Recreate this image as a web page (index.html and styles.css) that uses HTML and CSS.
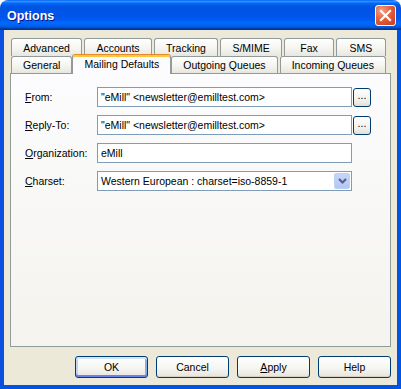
FILE: index.html
```html
<!DOCTYPE html>
<html lang="en">
<head>
  <meta charset="UTF-8">
  <title>Options</title>
  <link rel="stylesheet" href="styles.css">
</head>
<body>
  <div class="window">
    <!-- Title Bar -->
    <div class="titlebar">
      <span class="title">Options</span>
      <button class="close-button" aria-label="Close">
        <svg width="13" height="13" viewBox="0 0 13 13">
          <path d="M2 2 L11 11 M11 2 L2 11" stroke="#fff" stroke-width="2.2" stroke-linecap="square"></path>
        </svg>
      </button>
    </div>

    <div class="client">
      <!-- Tabs -->
      <div class="tabs">
        <div class="tab-row back">
          <div class="tab">Advanced</div>
          <div class="tab">Accounts</div>
          <div class="tab">Tracking</div>
          <div class="tab">S/MIME</div>
          <div class="tab">Fax</div>
          <div class="tab">SMS</div>
        </div>
        <div class="tab-row front">
          <div class="tab">General</div>
          <div class="tab active">Mailing Defaults</div>
          <div class="tab">Outgoing Queues</div>
          <div class="tab">Incoming Queues</div>
        </div>
      </div>

      <!-- Tab Panel -->
      <div class="tab-panel">
        <div class="form-grid">
          <label class="field-label"><u>F</u>rom:</label>
          <div class="text-field">"eMill" &lt;newsletter@emilltest.com&gt;</div>
          <button class="browse-button">...</button>

          <label class="field-label"><u>R</u>eply-To:</label>
          <div class="text-field">"eMill" &lt;newsletter@emilltest.com&gt;</div>
          <button class="browse-button">...</button>

          <label class="field-label"><u>O</u>rganization:</label>
          <div class="text-field">eMill</div>
          <span></span>

          <label class="field-label"><u>C</u>harset:</label>
          <div class="text-field select">
            <span class="select-value">Western European : charset=iso-8859-1</span>
            <span class="select-arrow">
              <svg width="9" height="6" viewBox="0 0 9 6">
                <path d="M1 1 L4.5 4.5 L8 1" fill="none" stroke="#4d6185" stroke-width="2"></path>
              </svg>
            </span>
          </div>
          <span></span>
        </div>
      </div>

      <!-- Dialog Buttons -->
      <div class="button-row">
        <button class="dialog-button default">OK</button>
        <button class="dialog-button">Cancel</button>
        <button class="dialog-button"><u>A</u>pply</button>
        <button class="dialog-button">Help</button>
      </div>
    </div>
  </div>
</body>
</html>
```

FILE: styles.css
```css
* {
  margin: 0;
  padding: 0;
  box-sizing: border-box;
}

body {
  background-color: #ffffff;
  font-family: "Liberation Sans", Arial, sans-serif;
  font-size: 10.5px;
  color: #000000;
}

button {
  font: inherit;
  color: inherit;
}

.window {
  width: 401px;
  height: 389px;
  display: flex;
  flex-direction: column;
}

/* Title bar */
.titlebar {
  height: 30px;
  flex: none;
  display: flex;
  align-items: center;
  justify-content: space-between;
  padding: 0 5px 0 7px;
  border-radius: 8px 8px 0 0;
  background: linear-gradient(to bottom,
    #0058ee 0%, #3593ff 4%, #288eff 6%, #127dff 8%, #036ffc 10%,
    #0262ee 14%, #0057e5 20%, #0054e3 24%, #0055eb 56%, #005bf5 66%,
    #026afe 76%, #0062ef 86%, #0052d6 92%, #0040ab 94%, #003092 100%);
}

.title {
  color: #ffffff;
  font-weight: bold;
  font-size: 12.5px;
  padding-top: 1px;
  text-shadow: 1px 1px #0f1089;
}

.close-button {
  width: 21px;
  height: 21px;
  display: flex;
  align-items: center;
  justify-content: center;
  border: 1px solid #ffffff;
  border-radius: 3px;
  background: radial-gradient(circle at 30% 25%, #f4a088 0%, #e3603c 45%, #c8391a 100%);
  cursor: pointer;
}

/* Client area */
.client {
  flex: 1;
  display: flex;
  flex-direction: column;
  background-color: #ece9d8;
  border: 4px solid #0054e3;
  border-top: none;
  border-left-color: #0a4fe0;
  padding: 8px 6px 7px 6px;
}

/* Tabs */
.tabs {
  display: flex;
  flex-direction: column;
  padding: 0 5px 0 1px;
}

.tab-row {
  display: flex;
  gap: 2px;
}

.tab-row.back {
  height: 18px;
}

.tab-row.front {
  height: 17px;
}

.tab {
  flex: 1 1 auto;
  display: flex;
  align-items: center;
  justify-content: center;
  padding: 0 6px;
  white-space: nowrap;
  border: 1px solid #919b9c;
  border-bottom: none;
  border-radius: 3px 3px 0 0;
  background: linear-gradient(to bottom, #ffffff, #f3f3ef 60%, #e8e6dd);
}

.tab-row.back .tab {
  min-width: 50px;
  padding-top: 1px;
}

.tab.active {
  position: relative;
  z-index: 1;
  height: 20px;
  margin: -2px -2px -1px;
  padding-bottom: 2px;
  border-top-color: #e68b2c;
  box-shadow: inset 0 2px 0 #ffc83c;
  background: #fcfcfe;
}

/* Panel */
.tab-panel {
  flex: 1;
  border: 1px solid #919b9c;
  background: linear-gradient(to bottom, #fcfcfe, #f4f3ee);
  padding: 13px 14px;
}

.form-grid {
  display: grid;
  grid-template-columns: 71px 255px 18px;
  grid-auto-rows: 20px;
  column-gap: 1px;
  row-gap: 8px;
}

.field-label {
  display: flex;
  align-items: center;
  white-space: nowrap;
}

.text-field {
  display: flex;
  align-items: center;
  padding: 0 3px;
  border: 1px solid #7f9db9;
  background-color: #ffffff;
  white-space: nowrap;
  overflow: hidden;
}

.select {
  justify-content: space-between;
  padding-right: 1px;
}

.select-arrow {
  width: 16px;
  height: 16px;
  display: flex;
  align-items: center;
  justify-content: center;
  border: 1px solid #bdd0f8;
  border-radius: 2px;
  background: linear-gradient(to bottom, #c6d5fb, #b3c7f5);
}

.browse-button {
  height: 19px;
  align-self: end;
  border: 1px solid #003c74;
  border-radius: 3px;
  background: linear-gradient(to bottom, #ffffff, #f0efea 70%, #e3e0d5);
  line-height: 1;
  padding-bottom: 4px;
}

/* Dialog buttons */
.button-row {
  display: flex;
  justify-content: flex-end;
  gap: 8px;
  margin-top: 9px;
}

.dialog-button {
  width: 73px;
  height: 22px;
  border: 1px solid #003c74;
  border-radius: 3px;
  background: linear-gradient(to bottom, #ffffff, #f4f4f0 60%, #e6e3da);
  box-shadow: inset 0 -1px 0 #d6d0c5;
  cursor: pointer;
}

.dialog-button.default {
  box-shadow: inset 0 2px 0 #cee7ff, inset 0 -2px 0 #6982ee, inset 2px 0 0 #bcd4f6, inset -2px 0 0 #89ade4;
}
```
